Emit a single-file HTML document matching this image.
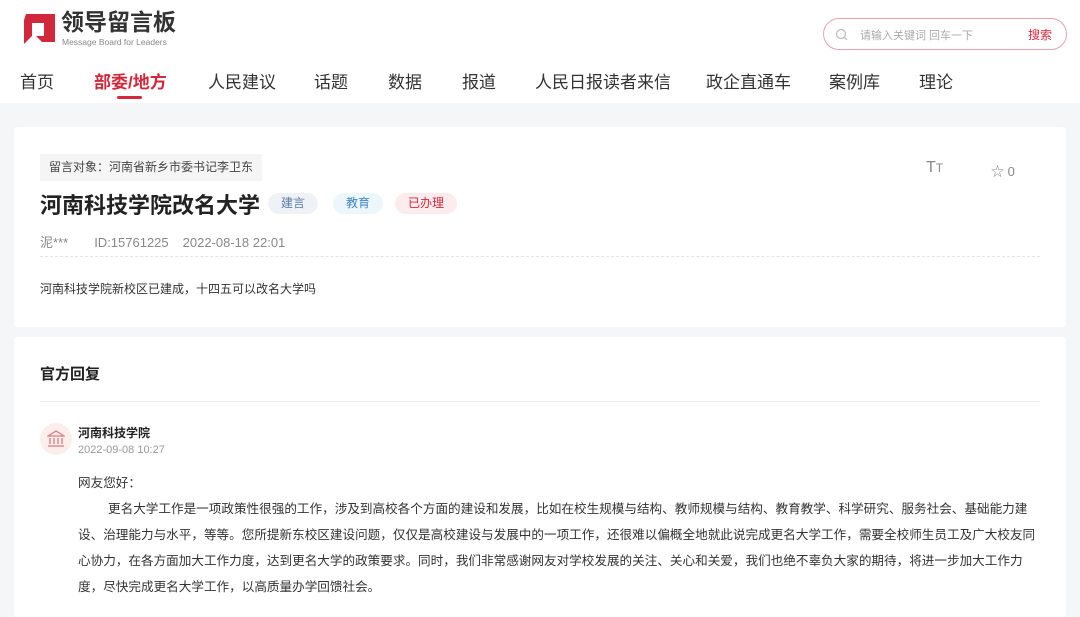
<!DOCTYPE html>
<html><head><meta charset="utf-8">
<style>
*{margin:0;padding:0;box-sizing:border-box}
body{width:1080px;height:601px;overflow:hidden;background:#f5f6f7;font-family:"Liberation Sans","Noto Sans CJK SC",sans-serif;color:#333}
.top{position:absolute;left:0;top:0;width:1080px;height:103px;background:#fff}
.logo{position:absolute;left:20px;top:12px}
.brand{position:absolute;left:61px;top:8px;font-size:23px;line-height:28px;font-weight:bold;color:#333;letter-spacing:0px}
.brand-en{position:absolute;left:62px;top:37px;font-size:8.5px;line-height:10px;color:#888}
.search{position:absolute;left:823px;top:18px;width:244px;height:32px;border:1px solid #e6a3ac;border-radius:16px}
.search .ph{position:absolute;left:36px;top:8px;font-size:11px;color:#aaa}
.search .btn{position:absolute;right:14px;top:7px;font-size:12px;color:#d2283c}
.nav{position:absolute;top:68px;font-size:17px;color:#333}
.nav.act{color:#d2283c;font-weight:bold}
.ul{position:absolute;left:117px;top:96px;width:25px;height:3px;background:#d2283c;border-radius:2px}
.card{position:absolute;left:14px;width:1052px;background:#fff;border-radius:4px}
.tag{position:absolute;top:193px;height:21px;line-height:21px;padding:0 13px;border-radius:11px;font-size:12px}
.p{position:absolute;left:78px;font-size:12.6px;color:#333;line-height:26px;width:964px}
</style></head><body>
<div class="top">
<svg class="logo" width="36" height="34" viewBox="0 0 36 34"><path d="M6 2H35V30H22L16 24H24V11H12V24L4 32V8Z" fill="#d2283c"/></svg>
<div class="brand">领导留言板</div>
<div class="brand-en">Message Board for Leaders</div>
<div class="search">
<svg style="position:absolute;left:11px;top:9px" width="13" height="13" viewBox="0 0 13 13"><circle cx="6" cy="6" r="4.5" fill="none" stroke="#bbb" stroke-width="1.2"/><path d="M9.5 9.5L12 12" stroke="#bbb" stroke-width="1.2"/></svg>
<span class="ph">请输入关键词 回车一下</span><span class="btn">搜索</span></div>
<span class="nav" style="left:20px">首页</span>
<span class="nav act" style="left:94px">部委/地方</span>
<span class="nav" style="left:208px">人民建议</span>
<span class="nav" style="left:314px">话题</span>
<span class="nav" style="left:388px">数据</span>
<span class="nav" style="left:462px">报道</span>
<span class="nav" style="left:535px">人民日报读者来信</span>
<span class="nav" style="left:706px">政企直通车</span>
<span class="nav" style="left:829px">案例库</span>
<span class="nav" style="left:919px">理论</span>
<div class="ul"></div>
</div>

<div class="card" style="top:127px;height:200px"></div>
<div style="position:absolute;left:40px;top:154px;height:27px;line-height:27px;padding:0 9px;background:#f5f5f5;font-size:12px;color:#444">留言对象：河南省新乡市委书记李卫东</div>
<div style="position:absolute;left:40px;top:188px;font-size:22px;font-weight:bold;color:#222">河南科技学院改名大学</div>
<span class="tag" style="left:268px;background:#eef2f7;color:#5a7ba6">建言</span>
<span class="tag" style="left:333px;background:#ecf6fb;color:#3f86c2">教育</span>
<span class="tag" style="left:395px;background:#fdecee;color:#d2283c">已办理</span>
<div style="position:absolute;left:926px;top:159px;font-size:16px;color:#888">T<span style="font-size:12px">T</span></div>
<div style="position:absolute;left:991px;top:161px;font-size:13px;color:#888">☆ 0</div>
<div style="position:absolute;left:40px;top:232px;font-size:13px;color:#888">泥***<span style="margin-left:26px">ID:15761225</span><span style="margin-left:14px">2022-08-18 22:01</span></div>
<div style="position:absolute;left:40px;top:256px;width:1000px;border-top:1px dashed #e3e3e3"></div>
<div style="position:absolute;left:40px;top:280px;font-size:12px;color:#333">河南科技学院新校区已建成，十四五可以改名大学吗</div>

<div class="card" style="top:337px;height:280px"></div>
<div style="position:absolute;left:40px;top:363px;font-size:15px;font-weight:bold;color:#222">官方回复</div>
<div style="position:absolute;left:40px;top:401px;width:1000px;border-top:1px solid #ececec"></div>
<div style="position:absolute;left:40px;top:423px;width:32px;height:32px;border-radius:50%;background:#fdeeee"></div>
<svg style="position:absolute;left:47px;top:430px" width="18" height="18" viewBox="0 0 18 18" fill="none" stroke="#e07a7e" stroke-width="1.3"><path d="M1 6L9 1L17 6Z M3 8V14 M7 8V14 M11 8V14 M15 8V14 M1 16H17"/></svg>
<div style="position:absolute;left:78px;top:424px;font-size:12px;font-weight:bold;color:#222">河南科技学院</div>
<div style="position:absolute;left:78px;top:444px;font-size:11px;color:#999">2022-09-08 10:27</div>
<div class="p" style="top:470px">网友您好：</div>
<div class="p" style="top:496px;text-indent:30px">更名大学工作是一项政策性很强的工作，涉及到高校各个方面的建设和发展，比如在校生规模与结构、教师规模与结构、教育教学、科学研究、服务社会、基础能力建设、治理能力与水平，等等。您所提新东校区建设问题，仅仅是高校建设与发展中的一项工作，还很难以偏概全地就此说完成更名大学工作，需要全校师生员工及广大校友同心协力，在各方面加大工作力度，达到更名大学的政策要求。同时，我们非常感谢网友对学校发展的关注、关心和关爱，我们也绝不辜负大家的期待，将进一步加大工作力度，尽快完成更名大学工作，以高质量办学回馈社会。</div>
</body></html>
